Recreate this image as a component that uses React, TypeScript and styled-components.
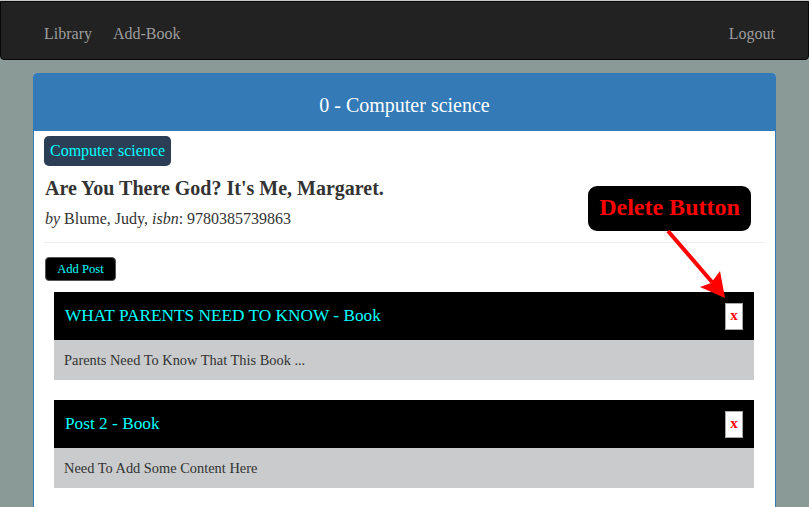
import React from "react";
import styled, { createGlobalStyle } from "styled-components";

const Global = createGlobalStyle`
  html, body { margin: 0; padding: 0; }
  body {
    background: #8a9a97;
    font-family: "Liberation Serif", "Times New Roman", serif;
    color: #333;
  }
`;

const Page = styled.div`
  position: relative;
  padding-top: 1px;
  box-sizing: border-box;
  overflow: hidden;
  height: 507px;
`;

const TopLine = styled.div`
  position: absolute;
  top: 0;
  left: 0;
  right: 0;
  height: 1px;
  background: #c8c8c8;
`;

const Navbar = styled.nav`
  height: 59px;
  box-sizing: border-box;
  background: #222;
  border: 1px solid #080808;
  border-radius: 0 0 4px 4px;
  display: flex;
  align-items: flex-start;
  justify-content: space-between;
  padding: 22px 33px 0 43px;
`;

const NavGroup = styled.div`
  display: flex;
  gap: 21px;
`;

const NavLink = styled.a`
  color: #9d9d9d;
  font-size: 16px;
  text-decoration: none;
  line-height: 20px;
`;

const Panel = styled.section`
  margin: 13px 33px 0 33px;
  border-radius: 4px 4px 0 0;
  overflow: hidden;
  background: #fff;
`;

const PanelHeading = styled.header`
  height: 58px;
  box-sizing: border-box;
  padding-top: 7px;
  background: #337ab7;
  color: #fff;
  font-size: 20px;
  display: flex;
  align-items: center;
  justify-content: center;
`;

const PanelBody = styled.div`
  border-left: 1px solid #337ab7;
  border-right: 1px solid #337ab7;
  padding: 5px 10px 40px 10px;
  min-height: 400px;
`;

const Tag = styled.span`
  display: inline-flex;
  align-items: center;
  height: 30px;
  box-sizing: border-box;
  padding: 0 6px;
  background: #2c3e56;
  color: #00ffff;
  font-size: 16px;
  border-radius: 5px;
`;

const BookTitle = styled.h4`
  margin: 11px 0 9px 1px;
  font-size: 20px;
  line-height: 22px;
  font-weight: bold;
  color: #333;
`;

const Byline = styled.p`
  margin: 0 0 0 1px;
  font-size: 16px;
  line-height: 22px;
  color: #333;
`;

const Divider = styled.hr`
  margin: 12px 0 14px 0;
  border: 0;
  border-top: 1px solid #eee;
`;

const AddPost = styled.button`
  margin-left: 1px;
  width: 71px;
  height: 24px;
  background: #000;
  color: #00ffff;
  font-family: "Liberation Serif", "Times New Roman", serif;
  font-size: 12.6px;
  border: 1px solid #555;
  border-radius: 4px;
  padding: 0;
  display: block;
`;

const Posts = styled.div`
  margin: 11px 11px 0 10px;
  display: flex;
  flex-direction: column;
  gap: 20px;
`;

const Post = styled.article``;

const PostHeader = styled.div`
  height: 48px;
  background: #000;
  display: flex;
  align-items: center;
  justify-content: space-between;
  padding: 0 11px;
`;

const PostTitle = styled.span`
  color: #00ffff;
  font-size: 17.3px;
`;

const DeleteButton = styled.button`
  width: 18px;
  height: 27px;
  box-sizing: border-box;
  background: #fff;
  border: 1px solid #a8a8a8;
  color: #ff0000;
  font-family: "Liberation Serif", "Times New Roman", serif;
  font-weight: bold;
  font-size: 15px;
  padding: 0 0 2px 0;
  display: flex;
  align-items: center;
  justify-content: center;
`;

const PostBody = styled.div`
  height: 40px;
  background: #c9cbcc;
  display: flex;
  align-items: center;
  padding: 0 10px;
  font-size: 14.4px;
  color: #333;
`;

const Callout = styled.div`
  position: absolute;
  left: 588px;
  top: 186px;
  width: 163px;
  height: 45px;
  box-sizing: border-box;
  background: #000;
  border-radius: 9px;
  color: #ff0000;
  font-weight: bold;
  font-size: 24px;
  display: flex;
  align-items: center;
  justify-content: center;
  padding-bottom: 2px;
`;

const ArrowSvg = styled.svg`
  position: absolute;
  left: 650px;
  top: 225px;
  width: 90px;
  height: 80px;
  pointer-events: none;
`;

const posts = [
  { title: "WHAT PARENTS NEED TO KNOW - Book", body: "Parents Need To Know That This Book ..." },
  { title: "Post 2 - Book", body: "Need To Add Some Content Here" },
];

export default function App() {
  return (
    <>
      <Global />
      <Page>
        <TopLine />
        <Navbar>
          <NavGroup>
            <NavLink href="#">Library</NavLink>
            <NavLink href="#">Add-Book</NavLink>
          </NavGroup>
          <NavLink href="#">Logout</NavLink>
        </Navbar>
        <Panel>
          <PanelHeading>0 - Computer science</PanelHeading>
          <PanelBody>
            <Tag>Computer science</Tag>
            <BookTitle>Are You There God? It's Me, Margaret.</BookTitle>
            <Byline>
              <i>by</i> Blume, Judy, <i>isbn</i>: 9780385739863
            </Byline>
            <Divider />
            <AddPost>Add Post</AddPost>
            <Posts>
              {posts.map((p) => (
                <Post key={p.title}>
                  <PostHeader>
                    <PostTitle>{p.title}</PostTitle>
                    <DeleteButton>x</DeleteButton>
                  </PostHeader>
                  <PostBody>{p.body}</PostBody>
                </Post>
              ))}
            </Posts>
          </PanelBody>
        </Panel>
        <Callout>Delete Button</Callout>
        <ArrowSvg viewBox="0 0 90 80">
          <line x1="18" y1="6" x2="62" y2="57" stroke="#ff0000" strokeWidth="4" />
          <polygon points="75,73 50,62 61,58 70,46" fill="#ff0000" />
        </ArrowSvg>
      </Page>
    </>
  );
}
